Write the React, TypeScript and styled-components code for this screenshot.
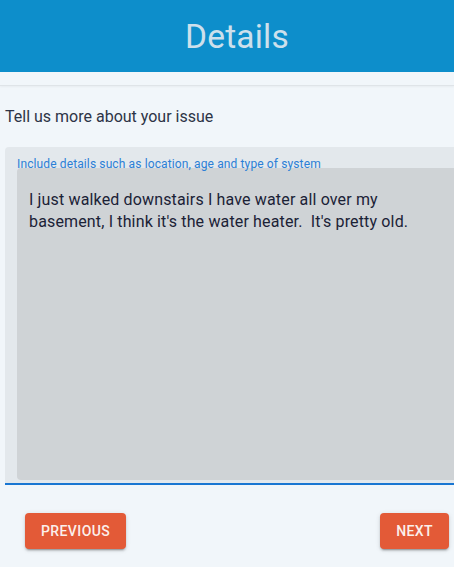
import React from "react";
import styled, { createGlobalStyle } from "styled-components";

const Global = createGlobalStyle`
  html, body {
    margin: 0;
    padding: 0;
    background: #f1f6fa;
    overflow: hidden;
    font-family: Roboto, "Liberation Sans", sans-serif;
  }
  * { box-sizing: border-box; }
`;

const Page = styled.div`
  width: 454px;
  min-height: 567px;
  background: #f1f6fa;
  display: flex;
  flex-direction: column;
`;

const Header = styled.header`
  height: 72px;
  background: #0d8ecb;
  display: flex;
  align-items: center;
  justify-content: center;
  padding-left: 20px;
`;

const Title = styled.h1`
  margin: 0;
  font-family: Roboto, "Liberation Sans", sans-serif;
  font-weight: 400;
  font-size: 33.5px;
  color: #cde0ec;
  letter-spacing: 0.2px;
`;

const Divider = styled.div`
  margin-top: 13px;
  height: 1px;
  background: #dfe4e8;
  box-shadow: 0 1px 2px rgba(0, 0, 0, 0.06);
`;

const Prompt = styled.p`
  margin: 20px 0 0 5px;
  font-size: 16px;
  line-height: 22px;
  color: #2d3446;
`;

const Field = styled.div`
  position: relative;
  margin: 19px 0 0 5px;
  width: 470px;
  background: #e3e8ec;
  border-radius: 4px 4px 0 0;
  padding: 21px 0 3px 12px;
  border-bottom: 2px solid #1976d2;
`;

const FieldLabel = styled.label`
  position: absolute;
  top: 9.5px;
  left: 12px;
  font-size: 12px;
  line-height: 14px;
  color: #2c7fd6;
  letter-spacing: 0.12px;
`;

const TextArea = styled.textarea`
  display: block;
  width: 100%;
  height: 312px;
  border: none;
  outline: none;
  resize: none;
  border-radius: 4px;
  background: #cfd3d6;
  padding: 20.5px 40px 0 12px;
  font-family: Roboto, "Liberation Sans", sans-serif;
  font-size: 16px;
  line-height: 22.5px;
  letter-spacing: 0.15px;
  color: #1b2236;
`;

const Actions = styled.div`
  display: flex;
  justify-content: space-between;
  padding: 28px 5px 19px 25px;
`;

const Button = styled.button`
  height: 36px;
  padding: 0 16px;
  border: none;
  border-radius: 4px;
  background: #e35a37;
  color: #fbf0ec;
  font-family: Roboto, "Liberation Sans", sans-serif;
  font-weight: 500;
  font-size: 14px;
  letter-spacing: 0.4px;
  text-transform: uppercase;
  box-shadow: 0 3px 1px -2px rgba(0, 0, 0, 0.2), 0 2px 2px 0 rgba(0, 0, 0, 0.14),
    0 1px 5px 0 rgba(0, 0, 0, 0.12);
  cursor: pointer;
`;

export default function App() {
  return (
    <Page>
      <Global />
      <Header>
        <Title>Details</Title>
      </Header>
      <Divider />
      <Prompt>Tell us more about your issue</Prompt>
      <Field>
        <FieldLabel>Include details such as location, age and type of system</FieldLabel>
        <TextArea
          defaultValue={"I just walked downstairs I have water all over my basement, I think it's the water heater.  It's pretty old."}
        />
      </Field>
      <Actions>
        <Button>Previous</Button>
        <Button>Next</Button>
      </Actions>
    </Page>
  );
}
